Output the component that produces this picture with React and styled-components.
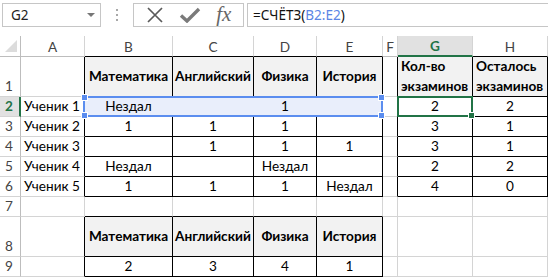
import React from "react";
import styled, { createGlobalStyle } from "styled-components";

const Global = createGlobalStyle`
  html, body { margin: 0; padding: 0; background: #fff; overflow: hidden; }
  body { font-family: "Lato", "Liberation Sans", sans-serif; }
`;

const Page = styled.div`
  width: 548px;
  height: 278px;
  display: flex;
  flex-direction: column;
  background: #fff;
`;

const Toolbar = styled.div`
  height: 36px;
  box-sizing: border-box;
  padding-top: 3px;
  display: flex;
  align-items: flex-start;
`;

const NameBox = styled.div`
  box-sizing: border-box;
  width: 99px;
  height: 24px;
  margin-left: 2px;
  border: 1px solid #c6c6c6;
  display: flex;
  align-items: center;
  justify-content: space-between;
  padding: 0 5px 0 8px;
  font-family: "Noto Sans", "Open Sans", sans-serif;
  font-size: 13.5px;
  color: #222;
`;

const Caret = styled.span`
  width: 0;
  height: 0;
  border-left: 4px solid transparent;
  border-right: 4px solid transparent;
  border-top: 4px solid #777;
`;

const Dots = styled.div`
  width: 32px;
  height: 24px;
  display: flex;
  flex-direction: column;
  align-items: center;
  justify-content: center;
  gap: 3px;
  span {
    width: 2px;
    height: 2px;
    background: #a8a8a8;
  }
`;

const Buttons = styled.div`
  box-sizing: border-box;
  width: 111px;
  height: 24px;
  border: 1px solid #c6c6c6;
  display: flex;
  align-items: center;
  justify-content: space-around;
  padding: 0 4px;
`;

const Fx = styled.span`
  font-family: "Liberation Serif", serif;
  font-style: italic;
  font-size: 21px;
  color: #666;
  line-height: 1;
  margin-top: -2px;
`;

const Formula = styled.div`
  box-sizing: border-box;
  flex: 1;
  height: 24px;
  margin-left: 3px;
  border: 1px solid #c6c6c6;
  border-right: none;
  display: flex;
  align-items: center;
  padding-left: 5px;
  font-family: "Noto Sans", "Open Sans", sans-serif;
  font-size: 13.5px;
  color: #111;
`;

const Ref = styled.span`
  color: #5b86e5;
`;

const Sheet = styled.div`
  display: grid;
  grid-template-columns: 21px 64px 88px 81px 63px 66px 15px 75px 75px;
  grid-template-rows: 21px 40px repeat(6, 20px) 40px 20px 1fr;
  flex: 1;
  font-size: 13.6px;
  color: #000;
`;

const Placed = styled.div`
  grid-row: ${(p) => p.$row};
  grid-column: ${(p) => p.$col};
  box-sizing: border-box;
  min-width: 0;
`;

const ColHead = styled(Placed)`
  border-right: 1px solid #d4d4d4;
  border-bottom: ${(p) => (p.$sel ? "2px solid #217346" : `1px solid ${p.$bb || "#bdbdbd"}`)};
  background: ${(p) => (p.$sel ? "#e1e1e1" : "#fff")};
  color: ${(p) => (p.$sel ? "#217346" : "#444")};
  font-weight: ${(p) => (p.$sel ? 700 : 400)};
  display: flex;
  align-items: center;
  justify-content: center;
  padding-top: 1px;
`;

const Corner = styled(Placed)`
  border-right: 1px solid #bdbdbd;
  border-bottom: 1px solid #bdbdbd;
  display: flex;
  align-items: flex-end;
  justify-content: flex-end;
  padding: 0 3px 4px 0;
`;

const RowHead = styled(Placed)`
  border-right: ${(p) => (p.$sel ? "2px solid #217346" : "1px solid #bdbdbd")};
  border-bottom: 1px solid #d4d4d4;
  background: ${(p) => (p.$sel ? "#e1e1e1" : "#fff")};
  color: ${(p) => (p.$sel ? "#217346" : "#444")};
  font-weight: ${(p) => (p.$sel ? 700 : 400)};
  display: flex;
  align-items: flex-end;
  padding: 0 0 1px 5px;
  line-height: 18px;
`;

const Cell = styled(Placed)`
  border-right: 1px solid ${(p) => p.$rb};
  border-bottom: 1px solid ${(p) => p.$bb};
  background: ${(p) => p.$bg};
  font-weight: ${(p) => (p.$bold ? 700 : 400)};
  display: flex;
  align-items: ${(p) => (p.$tall ? "center" : "flex-end")};
  justify-content: ${(p) => (p.$left ? "flex-start" : "center")};
  text-align: ${(p) => (p.$left ? "left" : "center")};
  padding: ${(p) => (p.$left ? "0 0 1px 3px" : "0 0 1px 0")};
  white-space: ${(p) => (p.$wrap ? "normal" : "nowrap")};
  line-height: ${(p) => (p.$wrap ? "20px" : "18px")};
`;

const RangeBox = styled(Placed)`
  margin: -1px 0 0 -2px;
  border: 2px solid #5b8def;
  position: relative;
  pointer-events: none;
  z-index: 2;
`;

const Handle = styled.span`
  position: absolute;
  width: 5px;
  height: 5px;
  background: #5b8def;
  border: 1px solid #fff;
  ${(p) => (p.$top ? "top: -4px;" : "bottom: -4px;")}
  ${(p) => (p.$leftSide ? "left: -4px;" : "right: -4px;")}
`;

const ActiveBox = styled(Placed)`
  margin: -1px 0 0 -1px;
  border: 2px solid #217346;
  position: relative;
  pointer-events: none;
  z-index: 2;
`;

const FillHandle = styled.span`
  position: absolute;
  right: -4px;
  bottom: -4px;
  width: 5px;
  height: 5px;
  background: #217346;
  border: 1px solid #fff;
`;

const cols = ["A", "B", "C", "D", "E", "F", "G", "H"];

const data = [
  ["", "Математика", "Английский", "Физика", "История", "", "Кол-во экзаминов", "Осталось экзаминов"],
  ["Ученик 1", "Нездал", "", "1", "", "", "2", "2"],
  ["Ученик 2", "1", "1", "1", "", "", "3", "1"],
  ["Ученик 3", "", "1", "1", "1", "", "3", "1"],
  ["Ученик 4", "Нездал", "", "Нездал", "", "", "2", "2"],
  ["Ученик 5", "1", "1", "1", "Нездал", "", "4", "0"],
  ["", "", "", "", "", "", "", ""],
  ["", "Математика", "Английский", "Физика", "История", "", "", ""],
  ["", "2", "3", "4", "1", "", "", ""],
];

const tables = [
  { r1: 1, r2: 6, c1: 2, c2: 5 },
  { r1: 1, r2: 6, c1: 7, c2: 8 },
  { r1: 8, r2: 9, c1: 2, c2: 5 },
];

const inTable = (r, c) => tables.some((t) => r >= t.r1 && r <= t.r2 && c >= t.c1 && c <= t.c2);
const isHeaderCell = (r, c) => inTable(r, c) && (r === 1 || r === 8);
const inRange = (r, c) => r === 2 && c >= 2 && c <= 5;

const GRID = "#d4d4d4";
const BLACK = "#000";

function X() {
  return (
    <svg width="18" height="16" viewBox="0 0 18 16">
      <path d="M2 1 L16 15 M16 1 L2 15" stroke="#5a5a5a" strokeWidth="1.7" fill="none" />
    </svg>
  );
}

function Check() {
  return (
    <svg width="22" height="16" viewBox="0 0 22 16">
      <path d="M2 8.5 L8 14 L20 2" stroke="#7a7a7a" strokeWidth="3.4" fill="none" />
    </svg>
  );
}

function Tri() {
  return (
    <svg width="12" height="12" viewBox="0 0 12 12">
      <polygon points="12,0 12,12 0,12" fill="#dcdcdc" />
    </svg>
  );
}

export default function App() {
  const cells = [];
  cells.push(
    <Corner key="corner" $row={1} $col={1}>
      <Tri />
    </Corner>
  );
  cols.forEach((l, i) => {
    const c = i + 1;
    cells.push(
      <ColHead key={"h" + l} $row={1} $col={c + 1} $sel={l === "G"} $bb={inTable(1, c) ? BLACK : undefined}>
        {l}
      </ColHead>
    );
  });
  data.forEach((row, ri) => {
    const r = ri + 1;
    cells.push(
      <RowHead key={"r" + r} $row={r + 1} $col={1} $sel={r === 2}>
        {r}
      </RowHead>
    );
    row.forEach((v, ci) => {
      const c = ci + 1;
      let rb = inTable(r, c) || inTable(r, c + 1) ? BLACK : GRID;
      const bb = inTable(r, c) || inTable(r + 1, c) ? BLACK : GRID;
      let bg = isHeaderCell(r, c) ? "#f2f2f2" : "#fff";
      if (inRange(r, c)) {
        bg = "#e9eefb";
        if (c < 5) rb = bg;
      }
      const wrap = r === 1 && (c === 7 || c === 8);
      cells.push(
        <Cell
          key={r + "-" + c}
          $row={r + 1}
          $col={c + 1}
          $rb={rb}
          $bb={bb}
          $bg={bg}
          $bold={isHeaderCell(r, c)}
          $left={c === 1 || wrap}
          $wrap={wrap}
          $tall={r === 1 || r === 8}
        >
          {v}
        </Cell>
      );
    });
  });

  return (
    <Page>
      <Global />
      <Toolbar>
        <NameBox>
          G2
          <Caret />
        </NameBox>
        <Dots>
          <span />
          <span />
          <span />
        </Dots>
        <Buttons>
          <X />
          <Check />
          <Fx>fx</Fx>
        </Buttons>
        <Formula>
          =СЧЁТЗ(<Ref>B2:E2</Ref>)
        </Formula>
      </Toolbar>
      <Sheet>
        {cells}
        <RangeBox $row={3} $col="3 / 7">
          <Handle $top $leftSide />
          <Handle $top />
          <Handle $leftSide />
          <Handle />
        </RangeBox>
        <ActiveBox $row={3} $col={8}>
          <FillHandle />
        </ActiveBox>
      </Sheet>
    </Page>
  );
}
